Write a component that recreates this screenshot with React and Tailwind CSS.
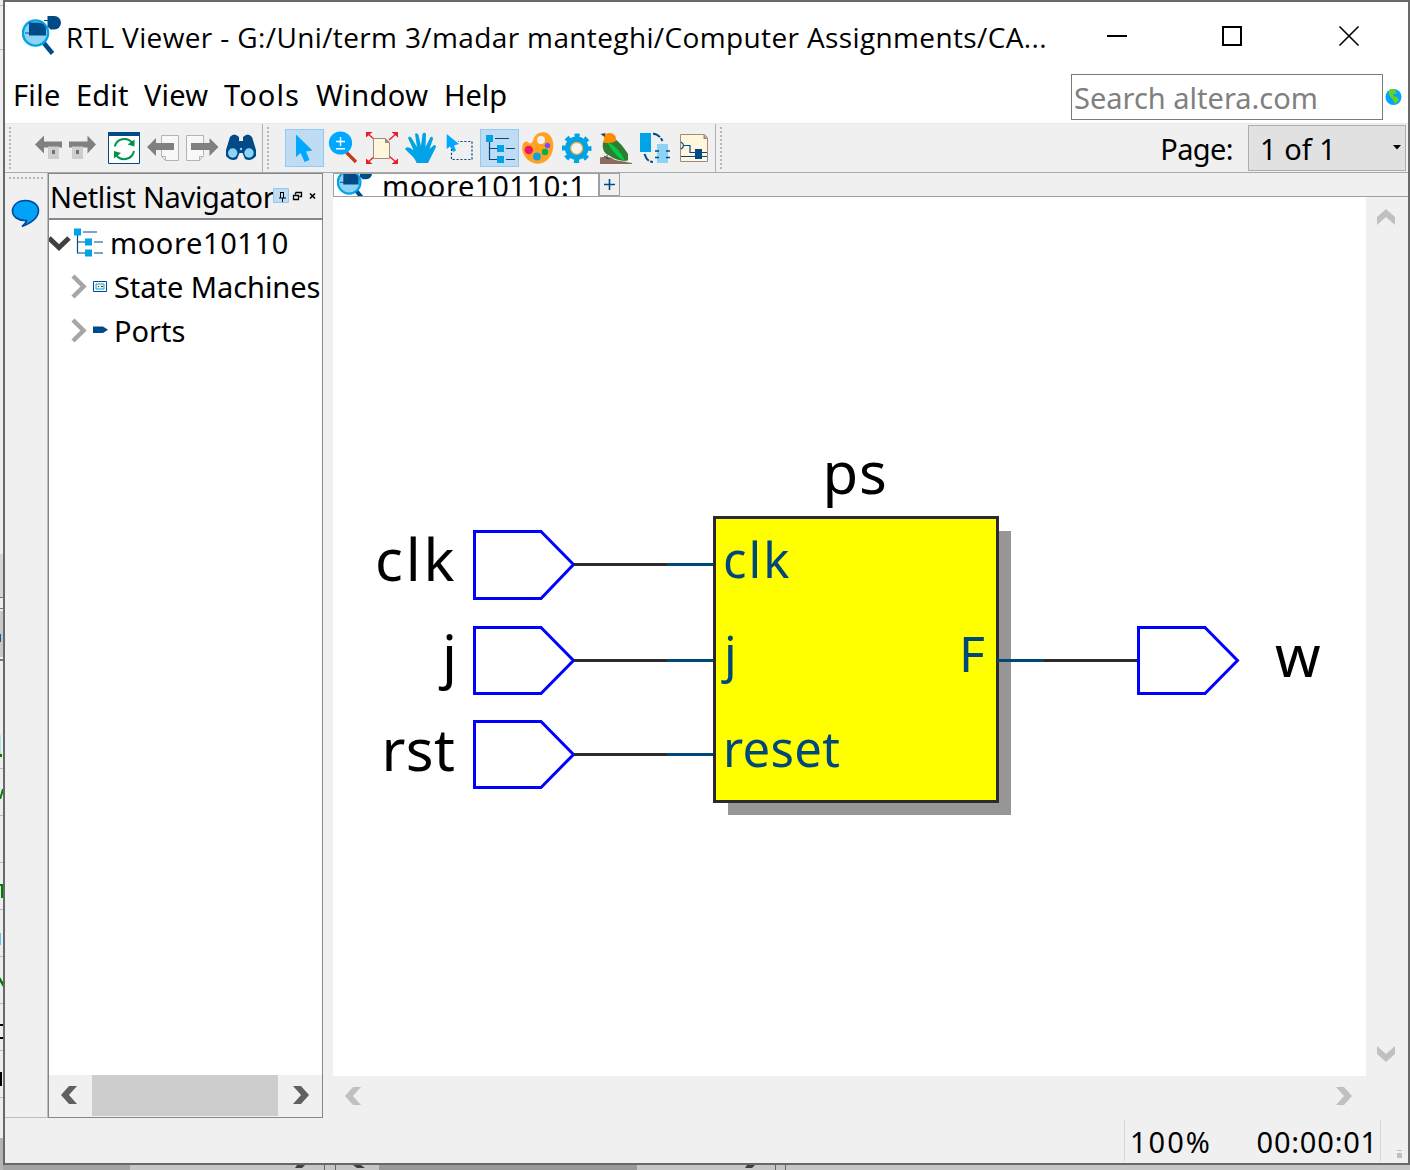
import React from "react";

const NAVY = "#004b87";
const SKY = "#00a3e6";

function Logo({ className = "" }) {
  return (
    <svg className={className} width="40" height="40" viewBox="0 0 40 40">
      <path d="M21 26 L30.500 37.500" stroke={NAVY} strokeWidth="4.500" />
      <circle cx="13.500" cy="17" r="12.600" fill="#8dd3f3" stroke={SKY} strokeWidth="2.400" />
      <path d="M7 6.500 h9 a8 7 0 0 1 8 7 v6 h-17 z" fill={NAVY} />
      <path d="M3 17 H9" stroke={NAVY} />
      <path d="M22 4.500 H28" stroke={NAVY} />
      <path d="M25.500 0 h7 a6.500 6.800 0 0 1 0 13.600 h-4 l-3 -3 z" fill={NAVY} />
    </svg>
  );
}

function Icon({ children, active }) {
  return (
    <div className={active ? "h-[38px] w-[39px] shrink-0 bg-[#c0dcf3] outline outline-1 -outline-offset-1 outline-[#90c8f6]" : "h-[38px] w-[39px] shrink-0"}>
      <svg width="39" height="38" viewBox="0 0 39 38" fill="none">
        {children}
      </svg>
    </div>
  );
}

function Grip() {
  return <div className="my-[3px] h-[43px] w-[2px] shrink-0 bg-[repeating-linear-gradient(to_bottom,#b8b8b8_0_2px,transparent_2px_4px)]" />;
}

function Tree() {
  return (
    <g>
      <path d="M9.500 12 V30.500 H18 M9.500 19.500 H18 M15 9.500 H29 M26 19.500 H35 M26 30.500 H35" stroke={NAVY} strokeWidth="1.200" />
      <path d="M6 6h7v7h-7z M17 16h7v7h-7z M17 27h7v7h-7z" fill={SKY} />
    </g>
  );
}

function HistoryIcons() {
  return (
    <>
      <Icon>
        <path d="M8 15.500 L17 6.500 V12.500 H35 V18.500 H17 V24.500 Z" fill="#808080" />
        <path d="M21 17.500h11v12.500h-11z" fill="#cecece" />
        <path d="M25 21h3v4h-3z" fill="#707070" />
      </Icon>
      <Icon>
        <path d="M30 15.500 L21.500 6.500 V12.500 H3 V18.500 H21.500 V24.500 Z" fill="#808080" />
        <path d="M6 17.500h11v12.500h-11z" fill="#cecece" />
        <path d="M10 21h3v4h-3z" fill="#707070" />
      </Icon>
      <Icon>
        <path d="M3.500 3.500h31v31h-31z" fill="#fff" stroke={NAVY} />
        <path d="M3 3h32v4h-32z" fill={NAVY} />
        <path d="M9.700 17.500 A10 10 0 0 1 27 13.500 M29 22 A10 10 0 0 1 11.500 26.500" stroke="#00924a" strokeWidth="2" />
        <path d="M29.500 10.500 V17.500 L22.500 15.500 Z M9 29.500 V22 L16 24 Z" fill="#00924a" />
      </Icon>
      <Icon>
        <path d="M17.500 6.500h17v25h-13l-4-4z" fill="#f8f8f8" stroke="#b4b4b4" />
        <path d="M17.500 27.500h4v4" stroke="#b4b4b4" />
        <path d="M3 18 L12 9 V14 H30 V21 H12 V27 Z" fill="#808080" />
      </Icon>
      <Icon>
        <path d="M3.500 6.500h17v20l-4 5h-13z" fill="#f8f8f8" stroke="#b4b4b4" />
        <path d="M20.500 27.500h-4v4" stroke="#b4b4b4" />
        <path d="M35.500 18 L26.500 9 V14 H8 V21 H26.500 V27 Z" fill="#808080" />
      </Icon>
      <Icon>
        <path d="M8 8 Q12 3 17 8 V12 H21 V8 Q26 3 30 8 L34 21 V27 Q29 33 23 30 L20.500 24 H17.500 L15 30 Q9 33 4 27 V21 Z" fill={NAVY} />
        <circle cx="10.700" cy="24" r="4.700" fill="#8dd3f3" />
        <circle cx="27" cy="24" r="4.700" fill="#8dd3f3" />
        <circle cx="19" cy="20" r="1.200" fill="#8dd3f3" />
      </Icon>
    </>
  );
}

function ToolIcons() {
  return (
    <>
      <Icon active>
        <path d="M11 5.500 V28 L15.700 24 L19.500 33 L24.500 31 L21 22.500 L27.500 21.500 Z" fill="#00a8ff" />
      </Icon>
      <Icon>
        <path d="M22.500 23.500 L32 33" stroke="#c23a10" strokeWidth="3.200" />
        <circle cx="16.500" cy="14" r="11.600" fill="#00a8ff" />
        <path d="M12 12.500 H21 M16.500 8 V17 M12 19.700 H21" stroke="#fff" strokeWidth="1.400" />
      </Icon>
      <Icon>
        <path d="M4 4 L12 11 M34 4 L26 11 M4 34 L12 27 M34 34 L26 27" stroke="#ed1c24" strokeWidth="1.400" />
        <path d="M3 3h6.500l-6.500 5.500z M35 3h-6.500l6.500 5.500z M3 35h6.500l-6.500-5.500z M35 35h-6.500l6.500-5.500z" fill="#ed1c24" />
        <path d="M10.500 9.500h12l4 4v16h-16z" fill="#fff6dc" stroke="#a08a80" />
        <path d="M22 9v5h5z" fill="#a08a80" />
      </Icon>
      <Icon>
        <path d="M14.500 34 Q13 29 8 25 L3 20 Q4.500 17 8 19 L11.500 21 L6 9 Q7.500 6 9.500 9 L15 18 L13 5 Q15 3 16.500 6 L19 17 L20.500 5 Q22.500 2 24 5 L23.500 18 L28.500 8 Q31 7 31 10 L27.500 20 L32 16 Q35 16 33.500 19 L29 28 L26 34 Z" fill={SKY} />
      </Icon>
      <Icon>
        <path d="M10.500 16 V30.500 H31 V12.500 H17" stroke={NAVY} strokeWidth="1.200" strokeDasharray="2.200 1.700" />
        <path d="M5.700 5 V20 L9 17.500 L12 23 L15 21.500 L13 16.500 L18 15 Z" fill="#00a8ff" />
      </Icon>
      <Icon active>
        <Tree />
      </Icon>
      <Icon>
        <path d="M22 3.500 C30 2 34.500 9 34.300 17 C34 27 27 35 18.500 34.700 C12 34.500 4 29 3.300 20 C3 15 5 12 8 12.500 C10 13 10 15.500 12.500 14 C15 12 14 5 22 3.500 Z" fill="#ffa21f" />
        <circle cx="22" cy="11" r="4" fill="#f0f0f0" />
        <circle cx="9.800" cy="21" r="4.200" fill="#ec1667" />
        <circle cx="18" cy="27.500" r="3.900" fill="#12a1df" />
        <circle cx="26" cy="23" r="3.200" fill="#00b050" />
        <circle cx="28.500" cy="16.500" r="2.700" fill="#7c4dff" />
      </Icon>
      <Icon>
        <circle cx="18.700" cy="19.300" r="9" stroke={SKY} strokeWidth="5.500" />
        <circle cx="18.700" cy="19.300" r="12.600" stroke={SKY} strokeWidth="4.400" strokeDasharray="5 4.896" strokeDashoffset="2.500" />
        <circle cx="18.700" cy="19.300" r="6" fill="#f4f4f4" stroke="#efab2f" strokeWidth="1.200" />
      </Icon>
      <Icon>
        <path d="M3 28.500 Q12 26 18 31 L35 34 V35 H3 Z" fill="#8c6a5d" />
        <path d="M24 27 L34.500 32.500 L20 31 Z" fill="#fff" />
        <path d="M6 13 Q4 24 13 27 Q18 31 27 32 L31 31.500 L31 25 Q24 14 18 10 Z" fill="#2e7d32" />
        <path d="M10 13 Q22 18 28.500 33 Q17 26 10 13 Z" fill="#00cc44" />
        <path d="M6 13.500 Q8 10 7 7 Q9 3.500 14 4 Q20 6 19 12 Q14 15 6 13.500 Z" fill="#fb8c00" />
        <path d="M3.500 5 L8.500 4 L7.500 8 Z" fill="#424242" />
        <path d="M7 27 l5 3 M10 26 v4" stroke="#424242" />
      </Icon>
      <Icon>
        <path d="M4 4h11v19h-11z" fill={SKY} />
        <path d="M21 15h11v19h-11z" fill="#8dd3f3" />
        <path d="M17 4.700 Q23 5 26.500 12 M8.500 25 Q11 33 17 33" stroke={NAVY} strokeWidth="2" strokeDasharray="8 1.500" />
        <path d="M19 22h4 M30 22h4 M19 28.500h4 M30 28.500h4" stroke={NAVY} strokeWidth="1.400" />
      </Icon>
      <Icon>
        <path d="M5.500 5.500h24l3 3v24h-27z" fill="#fff6dc" stroke="#a08a80" />
        <path d="M28.500 5v5h4z" fill="#a08a80" />
        <path d="M6 13 q5 3.500 0 7 M9 16.500 H15 V23.500 H21 M6 27.500 H32 M26 23.500 H32" stroke={NAVY} strokeWidth="1.200" />
        <path d="M20 20h7v10h-7z" fill={NAVY} />
      </Icon>
    </>
  );
}

function Chevron({ d, color, className = "" }) {
  return (
    <svg className={className} width="20" height="20" viewBox="0 0 20 20">
      <path d={d} fill={color} />
    </svg>
  );
}

const LEFT = "M10 1 H18 L10 10 L18 19 H10 L2 10 Z";
const RIGHT = "M10 1 H2 L10 10 L2 19 H10 L18 10 Z";
const UP = "M1 10 V18 L10 10 L19 18 V10 L10 2 Z";
const DOWN = "M1 10 V2 L10 10 L19 2 V10 L10 18 Z";

function TitleBar() {
  return (
    <div className="flex h-[71px] shrink-0 items-start bg-white">
      <Logo className="ml-[17px] mt-[14px] shrink-0" />
      <div className="ml-[4px] mt-[15px] w-[984px] whitespace-nowrap font-['Open_Sans',sans-serif] text-[28px] leading-[40px] tracking-[0.37px]">
        RTL Viewer - G:/Uni/term 3/madar manteghi/Computer Assignments/CA...
      </div>
      <svg className="ml-[56px] mt-[22px] shrink-0" width="260" height="26" fill="none" stroke="#000">
        <path d="M1 12 H21" strokeWidth="2" />
        <path d="M117 3 H135 V21 H117 Z" strokeWidth="2" />
        <path d="M233.500 2.500 L252.500 21.500 M252.500 2.500 L233.500 21.500" strokeWidth="1.600" />
      </svg>
    </div>
  );
}

function MenuBar() {
  return (
    <div className="flex h-[50px] shrink-0 items-start bg-white">
      <div className="ml-[8px] mt-[3px] flex gap-[17px] whitespace-nowrap text-[29px] leading-[38px]">
        <span className="w-[46px] tracking-[0.3px]">File</span>
        <span className="w-[51px] tracking-[0.2px]">Edit</span>
        <span className="w-[63px] tracking-[0.2px]">View</span>
        <span className="w-[75px] tracking-[1.1px]">Tools</span>
        <span className="w-[111px] tracking-[0.4px]">Window</span>
        <span className="w-[62px]">Help</span>
      </div>
      <div className="ml-auto mt-px flex h-[46px] w-[312px] items-center border border-[#7a7a7a] pl-[2px] pt-[2px] text-[29px] text-[#808080]">Search altera.com</div>
      <svg className="ml-[2px] mr-[6px] mt-[15px]" width="17" height="18">
        <circle cx="8.500" cy="9" r="8" fill="#00a3ff" />
        <path d="M4 2 Q8 0 10 2 L12 5 L9 6 L8 8 L12 9 L14 12 L10 16 L8 12 L4 7 Z" fill="#66d21e" />
      </svg>
    </div>
  );
}

function Toolbar() {
  return (
    <div className="flex h-[50px] shrink-0 items-start border-b border-[#a9a9a9] border-t border-t-[#e8e8e8] bg-[#f0f0f0]">
      <div className="flex h-full w-[258px] shrink-0 border-r border-[#b0b0b0] pl-[4px]">
        <Grip />
        <div className="ml-[16px] mt-[5px] flex">
          <HistoryIcons />
        </div>
      </div>
      <div className="flex h-full w-[453px] shrink-0 border-r border-[#b0b0b0] pl-[4px]">
        <Grip />
        <div className="ml-[16px] mt-[5px] flex">
          <ToolIcons />
        </div>
      </div>
      <div className="flex h-full pl-[4px]">
        <Grip />
      </div>
      <div className="ml-auto mr-[15px] mt-[6px] text-[29px] leading-[38px] tracking-[-0.6px]">Page:</div>
      <div className="mr-[2px] mt-[1px] flex h-[46px] w-[158px] items-center justify-between border border-[#adadad] bg-[#e1e1e1] pl-[11px] pr-[4px] pt-[2px] text-[29px]">
        <span>1 of 1</span>
        <svg width="8" height="5" className="-mt-[4px]">
          <path d="M0 0h8l-4 4.500z" />
        </svg>
      </div>
    </div>
  );
}

function BranchArrow() {
  return (
    <svg className="-mt-[2px] shrink-0" width="18" height="26" fill="none">
      <path d="M2 2 L12.500 12.500 L2 23" stroke="#a6a6a6" strokeWidth="4.500" />
    </svg>
  );
}

function Navigator() {
  return (
    <div className="flex w-[275px] shrink-0 flex-col border border-[#828790] bg-white">
      <div className="flex h-[46px] shrink-0 items-center whitespace-nowrap border-b-2 border-[#828790] bg-[#f0f0f0] pl-px text-[29px]">
        <span className="w-[223px] pt-[2px] tracking-[-0.35px]">Netlist Navigator</span>
        <svg width="49" height="16" fill="none" stroke="#000">
          <path d="M.500 .500h15v14h-15z" fill="#c0dcf3" stroke="#90c8f6" />
          <path d="M7.500 4v6 M10.500 4v6 M7 4.500h4 M6 10h7 M9.500 10v4" />
          <path d="M22.500 4.500h6v4h-2 M22.500 4.500v2 M20.500 7.500h5v4h-5z" strokeWidth="1.300" />
          <path d="M37 5.500l5 5 M42 5.500l-5 5" strokeWidth="1.600" />
        </svg>
      </div>
      <div className="flex grow flex-col pt-[2px] text-[29px] leading-[42px]">
        <div className="flex h-[44px] items-center">
          <svg className="-mt-[3px] shrink-0" width="22" height="20" fill="none">
            <path d="M0 5 L10 14.500 L20 5" stroke="#404040" strokeWidth="5" />
          </svg>
          <svg className="-mt-[3px] ml-[3px] shrink-0" width="29" height="30" viewBox="6 5.500 29 30" fill="none">
            <Tree />
          </svg>
          <span className="-mt-[2px] ml-[7px] tracking-[0.6px]">moore10110</span>
        </div>
        <div className="flex h-[44px] items-center whitespace-nowrap pl-[22px]">
          <BranchArrow />
          <svg className="-mt-[3px] ml-[4px] shrink-0" width="15" height="12" fill="none">
            <path d="M.500 .500h13v10h-13z" stroke="#0047a0" fill="#fff" />
            <path d="M3 3h8v5h-8z" stroke={SKY} fill="#fff6c8" />
            <path d="M5 5.500h1 M8 5.500h2" stroke={NAVY} />
          </svg>
          <span className="-mt-[2px] ml-[6px] tracking-[-0.05px]">State Machines</span>
        </div>
        <div className="flex h-[44px] items-center whitespace-nowrap pl-[22px]">
          <BranchArrow />
          <svg className="-mt-[4px] ml-[4px] shrink-0" width="15" height="8">
            <path d="M0 .500h10l5 3.300l-5 3.300h-10z" fill={NAVY} />
          </svg>
          <span className="-mt-[2px] ml-[6px]">Ports</span>
        </div>
      </div>
      <div className="flex h-[42px] shrink-0 items-start justify-between bg-[#f0f0f0] pl-[10px] pr-[11px]">
        <Chevron d={LEFT} color="#606060" className="mt-[10px]" />
        <div className="h-[41px] w-[186px] bg-[#cdcdcd]" />
        <Chevron d={RIGHT} color="#606060" className="mt-[10px]" />
      </div>
    </div>
  );
}

function InputPort({ y, bottom = 66, labelX, labelY, label, spacing = 0 }) {
  return (
    <g>
      <text x={labelX} y={labelY} letterSpacing={spacing} fontSize="58" fill="#000">{label}</text>
      <path d={`M141.500 ${y - 33} H208 L240.500 ${y} L208 ${y - 33 + bottom} H141.500 Z`} stroke="#00f" strokeWidth="3" fill="none" />
      <path d={`M241 ${y} H334`} stroke="#2b2b2b" strokeWidth="3" />
      <path d={`M334 ${y} H381`} stroke="#00477a" strokeWidth="3" />
    </g>
  );
}

/* Netlist schematic: three input ports feeding the state machine, one output. */
function Schematic() {
  return (
    <svg width="1033" height="879" viewBox="0 0 1033 879" fill="none" className="bg-white font-['Noto_Sans',sans-serif]">
      <path d="M395 334h283v284h-283z" fill="#969696" />
      <InputPort y={367.500} bottom={67} label="clk" labelX={42} labelY={383.5} spacing={2.8} />
      <InputPort y={463.500} label="j" labelX={109} labelY={479.5} />
      <InputPort y={557.500} label="rst" labelX={48.500} labelY={573.5} spacing={0.4} />
      <path d="M381.500 320.500h283v284h-283z" fill="#ff0" stroke="#2b2b2b" strokeWidth="3" />
      <text x="489.500" y="297" fontSize="58" letterSpacing="0.800" fill="#000">ps</text>
      <g fontSize="49" fill="#00477a">
        <text x="390" y="380.500" letterSpacing="2">clk</text>
        <text x="391" y="475">j</text>
        <text x="390" y="570" letterSpacing="0.300">reset</text>
        <text x="626" y="475" fontSize="50">F</text>
      </g>
      <path d="M664 463.500H711" stroke="#00477a" strokeWidth="3" />
      <path d="M711 463.500H805" stroke="#2b2b2b" strokeWidth="3" />
      <path d="M805.500 430.500 H872 L904.500 463.500 L872 496.500 H805.500 Z" stroke="#00f" strokeWidth="3" />
      <text x="942" y="480" fontSize="58" fill="#000">w</text>
    </svg>
  );
}

function Workspace() {
  return (
    <div className="flex grow flex-col bg-[#f0f0f0]">
      <div className="flex h-[24px] shrink-0 border-b border-[#a0a0a0]">
        <div className="flex h-[23px] w-[266px] items-start overflow-hidden border border-b-0 border-[#a0a0a0] bg-white">
          <Logo className="-mt-[9px] ml-px shrink-0 scale-[0.9]" />
          <span className="-mt-[7px] ml-[7px] text-[29px] leading-[38px] tracking-[0.6px]">moore10110:1</span>
        </div>
        <div className="flex h-[23px] w-[21px] items-center justify-center border border-[#a0a0a0]">
          <svg width="11" height="11">
            <path d="M0 5.500h11M5.500 0v11" stroke={NAVY} strokeWidth="1.600" />
          </svg>
        </div>
      </div>
      <div className="flex h-[879px]">
        <Schematic />
        <div className="flex grow flex-col items-center justify-between py-[10px] pr-[2px]">
          <Chevron d={UP} color="#c0c0c0" />
          <Chevron d={DOWN} color="#c0c0c0" className="mb-[2px]" />
        </div>
      </div>
      <div className="flex h-[40px] w-[1033px] items-center justify-between pl-[10px] pr-[12px]">
        <Chevron d={LEFT} color="#c0c0c0" />
        <Chevron d={RIGHT} color="#c0c0c0" />
      </div>
    </div>
  );
}

function StatusBar() {
  return (
    <div className="flex h-[45px] shrink-0 items-start justify-end bg-[#f0f0f0] text-[29px] leading-[38px]">
      <div className="mt-[2px] flex h-[41px] w-[257px] justify-between border-x border-[#d7d7d7] pl-[5px] pr-[2px] pt-[3px]">
        <span className="tracking-[2px]">100%</span>
        <span className="tracking-[0.8px]">00:00:01</span>
      </div>
      <div className="ml-[16px] mr-[6px] mt-[32px] h-[8px] w-[5px] border-t border-[#bfbfbf] pt-[2px]">
        <div className="h-[5px] w-[5px] bg-[#bfbfbf]" />
      </div>
    </div>
  );
}

/* Sliver of the editor window that stays visible behind this one. */
function EditorSliver() {
  return (
    <svg className="shrink-0" width="3" height="1170" viewBox="0 0 3 1170">
      <path d="M0 0h3v1170h-3z" fill="#eeeeee" />
      <path d="M0 554h3v43h-3z" fill="#d5d5d5" />
      <path d="M0 611h3v46h-3z" fill="#c8c8c8" />
      <path d="M0 597h3v1h-3z M0 608h3v1h-3z M0 659h3v2h-3z" fill="#777777" />
      <path d="M0 5h3v1h-3z M0 49h3v1h-3z M0 768h3v1h-3z M0 815h3v1h-3z M0 862h3v1h-3z M0 909h3v1h-3z M0 956h3v1h-3z M0 1003h3v1h-3z M0 1050h3v1h-3z M0 1097h3v1h-3z" fill="#bdbdbd" />
      <path d="M0 634h1v8h-1z" fill="#0060b0" />
      <path d="M0 735h1v20h-1z" fill="#a5e8ec" />
      <path d="M0 754h2v3h-2z M2 789h1v4l-2 6h-1v-3z M0 884h3v2h-3z M1 886h2v12h-2z M0 977l3 5v5l-3-5z" fill="#008000" />
      <path d="M0 933h1v12h-1z" fill="#60c8f0" />
      <path d="M0 1024h3v2h-3z M0 1037h3v2h-3z M0 1072h2v14h-2z" fill="#000000" />
      <path d="M0 1138h3v32h-3z" fill="#b4b4b4" />
    </svg>
  );
}

/* Bottom edge of the editor window, with the tops of its scroll arrows. */
function EditorFooter() {
  return (
    <svg className="shrink-0" width="1407" height="5" viewBox="0 0 1407 5">
      <path d="M0 0h127v5h-127z" fill="#a4a4a4" />
      <path d="M127 0h1280v5h-1280z" fill="#c6c6c6" />
      <path d="M376 0h258v5h-258z" fill="#999999" />
      <path d="M321 0h1v5h-1z M332 0h1v5h-1z M772 0h1v5h-1z M782 0h1v5h-1z" fill="#666666" />
      <path d="M294 0h8l-3 3h-7z M350 0h8l4 3h-8z M744 0h8l-3 3h-7z" fill="#404040" />
    </svg>
  );
}

export default function App() {
  return (
    <div className="flex h-[1170px] w-[1410px] overflow-hidden bg-[#b4b4b4] font-['Noto_Sans',sans-serif] text-black">
      <EditorSliver />
      <div className="flex w-[1407px] shrink-0 flex-col">
        <div className="flex h-[1165px] shrink-0 flex-col border-2 border-[#686868]">
          <TitleBar />
          <MenuBar />
          <Toolbar />
          <div className="flex h-[945px] shrink-0 bg-[#f0f0f0]">
            <div className="flex w-[43px] shrink-0 flex-col items-center border-b border-r border-[#bdbdbd]">
              <div className="mt-[4px] h-[2px] w-[35px] bg-[repeating-linear-gradient(to_right,#b8b8b8_0_2px,transparent_2px_4px)]" />
              <svg className="-ml-px mt-[20px]" width="29" height="29">
                <path d="M14.500 1.500 C22 1.500 27.500 6 27.500 11.500 C27.500 19 20 24 11 27.500 Q15 24.500 15.500 21.500 C7 22 1.500 17.500 1.500 12 C1.500 6 7 1.500 14.500 1.500 Z" fill="#00a3f5" stroke="#0047a0" strokeWidth="1.600" />
              </svg>
            </div>
            <Navigator />
            <div className="w-[10px] shrink-0" />
            <Workspace />
          </div>
          <StatusBar />
        </div>
        <EditorFooter />
      </div>
    </div>
  );
}
